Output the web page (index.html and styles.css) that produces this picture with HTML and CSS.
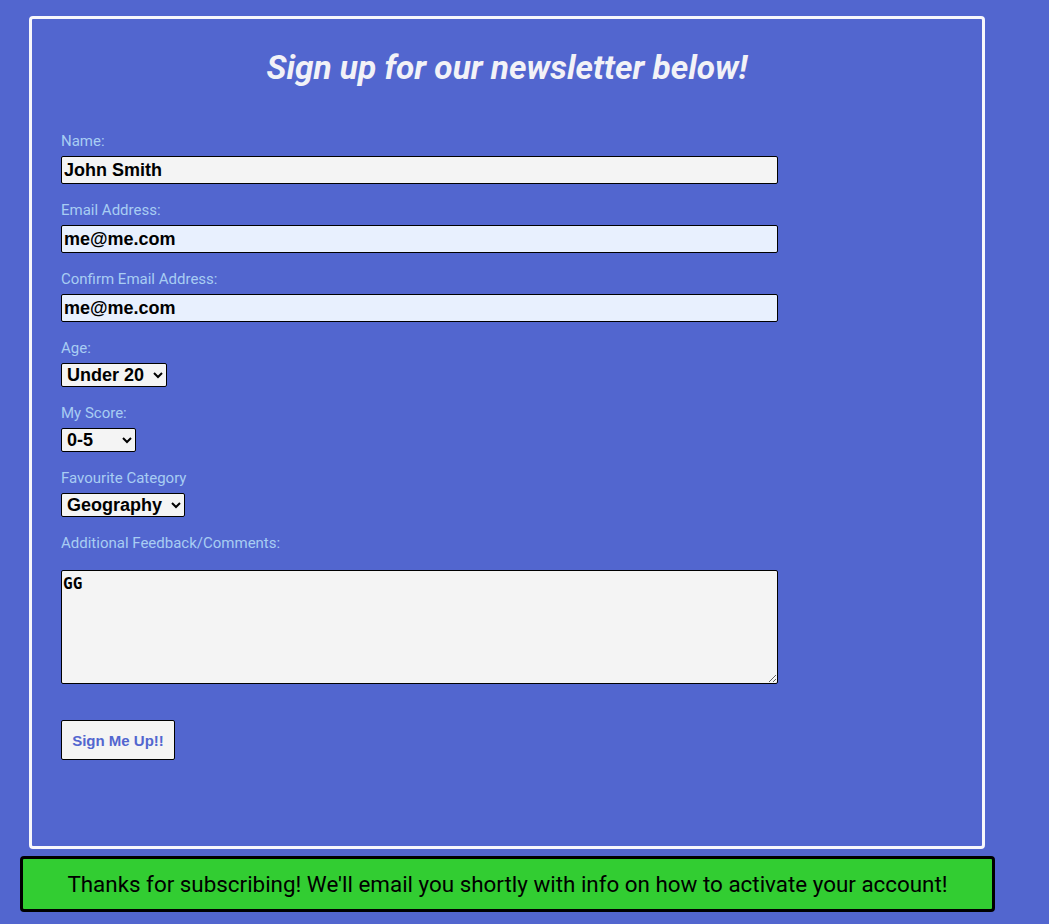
FILE: index.html
```html
<!DOCTYPE html>
<html lang="en">
<head>
<meta charset="utf-8">
<title>Newsletter</title>
<link rel="stylesheet" href="styles.css">
</head>
<body>
<div class="panel">
  <h1 class="title">Sign up for our newsletter below!</h1>
  <form class="form">
    <div class="field">
      <label class="label" for="name">Name:</label>
      <input class="text-input" id="name" type="text" value="John Smith">
    </div>
    <div class="field">
      <label class="label" for="email">Email Address:</label>
      <input class="text-input autofill" id="email" type="email" value="me@me.com">
    </div>
    <div class="field">
      <label class="label" for="email2">Confirm Email Address:</label>
      <input class="text-input autofill" id="email2" type="email" value="me@me.com">
    </div>
    <div class="field">
      <label class="label" for="age">Age:</label>
      <select class="select select-age" id="age">
        <option>Under 20</option>
        <option>20-39</option>
        <option>40-59</option>
        <option>60+</option>
      </select>
    </div>
    <div class="field">
      <label class="label" for="score">My Score:</label>
      <select class="select select-score" id="score">
        <option>0-5</option>
        <option>6-10</option>
        <option>11-15</option>
        <option>16-20</option>
      </select>
    </div>
    <div class="field">
      <label class="label" for="cat">Favourite Category</label>
      <select class="select select-cat" id="cat">
        <option>Geography</option>
        <option>History</option>
        <option>Science</option>
        <option>Sport</option>
      </select>
    </div>
    <div class="field field-area">
      <label class="label" for="comments">Additional Feedback/Comments:</label>
      <textarea class="textarea" id="comments">GG</textarea>
    </div>
    <button class="submit" type="button">Sign Me Up!!</button>
  </form>
</div>
<div class="notice">Thanks for subscribing! We'll email you shortly with info on how to activate your account!</div>
</body>
</html>
```
FILE: styles.css
```css
html, body {
  margin: 0;
  padding: 0;
}
body {
  background: #5266cf;
  font-family: Roboto, "Liberation Sans", Arial, sans-serif;
  padding: 16px 0 0 20px;
  height: 924px;
  box-sizing: border-box;
  overflow: hidden;
}
.panel {
  box-sizing: border-box;
  width: 956px;
  height: 833px;
  margin-left: 9px;
  border: 3px solid #f7f7fb;
  border-radius: 4px;
  padding: 0 29px;
}
.title {
  margin: 29px 0 0;
  text-align: center;
  font-size: 33.4px;
  font-style: italic;
  font-weight: 700;
  color: #f2f2f7;
  line-height: 40px;
}
.form {
  display: flex;
  flex-direction: column;
  align-items: flex-start;
  margin-top: 45px;
}
.field {
  display: flex;
  flex-direction: column;
  align-items: flex-start;
  gap: 6px;
  margin-bottom: 18px;
}
.field-area {
  gap: 18px;
  margin-bottom: 36px;
}
.label {
  font-size: 15px;
  line-height: 17px;
  color: #a8cdf3;
}
.text-input {
  box-sizing: border-box;
  width: 717px;
  height: 28px;
  margin: 0;
  border: 1px solid #000;
  border-radius: 2px;
  background: #f4f4f4;
  padding: 0 2px;
  font-family: "Liberation Sans", Arial, sans-serif;
  font-weight: 700;
  font-size: 18px;
  color: #000;
}
.text-input.autofill {
  background: #e8f0fe;
}
.select {
  box-sizing: border-box;
  height: 24px;
  margin: 0;
  border: 1px solid #000;
  border-radius: 2px;
  background-color: #f4f4f4;
  font-family: "Liberation Sans", Arial, sans-serif;
  font-weight: 700;
  font-size: 18px;
  color: #000;
  padding: 0 0 0 1px;
}
.select-age { width: 106px; }
.select-score { width: 75px; }
.select-cat { width: 124px; }
.textarea {
  box-sizing: border-box;
  width: 717px;
  height: 114px;
  margin: 0;
  border: 1px solid #000;
  border-radius: 2px;
  background: #f4f4f4;
  padding: 3px 1px;
  font-family: "DejaVu Sans Mono", "Liberation Mono", monospace;
  font-weight: 700;
  font-size: 16px;
  color: #000;
}
.submit {
  box-sizing: border-box;
  width: 114px;
  height: 40px;
  margin: 0;
  border: 1px solid #000;
  border-radius: 2px;
  background: #f4f4f4;
  color: #5266cf;
  font-family: "Liberation Sans", Arial, sans-serif;
  font-weight: 700;
  font-size: 15px;
  padding: 0;
}
.notice {
  box-sizing: border-box;
  width: 975px;
  height: 56px;
  margin-top: 7px;
  border: 3px solid #000;
  border-radius: 4px;
  background: #32cd32;
  color: #000;
  font-size: 22.4px;
  display: flex;
  align-items: center;
  justify-content: center;
}
```
